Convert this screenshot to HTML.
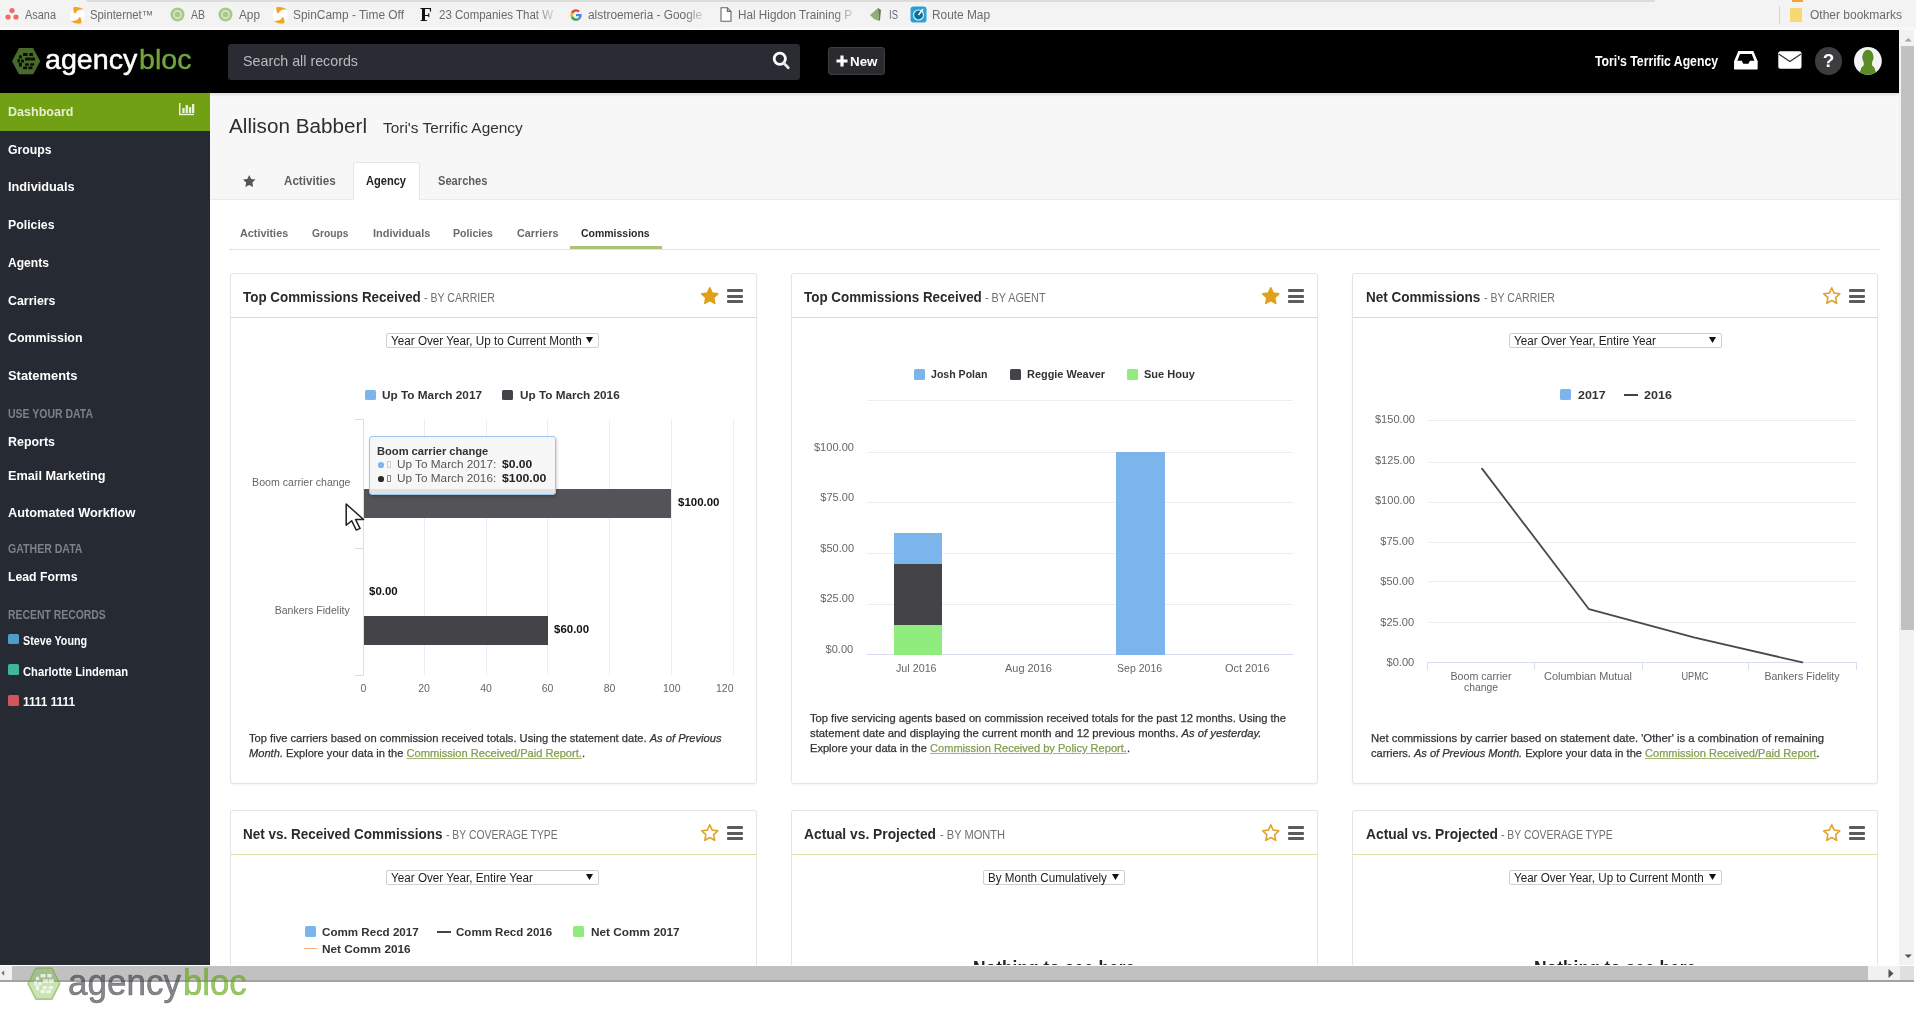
<!DOCTYPE html>
<html lang="en">
<head>
<meta charset="utf-8">
<title>AgencyBloc - Dashboard</title>
<style>
html,body{margin:0;padding:0;background:#fff;}
body{width:1916px;height:1028px;overflow:hidden;font-family:"Liberation Sans",Arial,sans-serif;}
#root{will-change:transform;filter:blur(.45px);position:relative;width:1916px;height:1028px;overflow:hidden;background:#fff;}
.b{position:absolute;box-sizing:border-box;}
.t{position:absolute;white-space:nowrap;line-height:1;display:block;}
svg{position:absolute;overflow:visible;}
a{color:#839c4e;text-decoration:underline;text-decoration-color:#a3b878;-webkit-text-stroke-color:#839c4e;}
i{font-style:italic;}
</style>
</head>
<body>
<div id="root">
<div class="b" style="left:0px;top:0px;width:1916px;height:30px;background:#f3f3f3;"></div>
<div class="b" style="left:0px;top:27px;width:1916px;height:3px;background:#f8f8f8;"></div>
<div class="b" style="left:86px;top:0px;width:1569px;height:1.8px;background:#dcdcdc;border-radius:0 0 5px 5px;"></div>
<svg style="left:5px;top:7px" width="14" height="14" viewBox="0 0 14 14"><circle cx="7" cy="3.6" r="2.6" fill="#f06a6a"/><circle cx="3" cy="10" r="2.6" fill="#f06a6a"/><circle cx="11" cy="10" r="2.6" fill="#f06a6a"/></svg>
<span class="t" style="top:9px;font-size:12px;color:#6a6a6a;left:25.00px;transform:scaleX(0.9109);transform-origin:0 50%;">Asana</span>
<svg style="left:68.5px;top:6px" width="16.500" height="18.500" viewBox="0 0 16.500 18.500"><circle cx="8.200" cy="9.200" r="7.800" fill="#fff" opacity=".85"/><g fill="#f5a21f"><path d="M4.500 1.300 C8 .600 12 1.400 14.900 3.600 C12 3.400 9.600 3.800 8.100 5 C7.100 5.900 6.600 6.900 6.100 7.800 C4.400 6.500 3.900 3.900 4.500 1.300Z"/><path d="M4.500 1.300 C8 .600 12 1.400 14.900 3.600 C12 3.400 9.600 3.800 8.100 5 C7.100 5.900 6.600 6.900 6.100 7.800 C4.400 6.500 3.900 3.900 4.500 1.300Z" transform="rotate(180 8.350 9.250)"/></g></svg>
<span class="t" style="top:9px;font-size:12px;color:#6a6a6a;left:90.00px;transform:scaleX(0.9445);transform-origin:0 50%;">Spinternet™</span>
<svg style="left:170px;top:7px" width="15" height="15" viewBox="0 0 15 15"><circle cx="7.5" cy="7.5" r="7" fill="#a9c98a"/><circle cx="7.5" cy="7.5" r="3.6" fill="none" stroke="#e6f0da" stroke-width="1.2"/></svg>
<span class="t" style="top:9px;font-size:12px;color:#6a6a6a;left:191.00px;transform:scaleX(0.8741);transform-origin:0 50%;">AB</span>
<svg style="left:218px;top:7px" width="15" height="15" viewBox="0 0 15 15"><circle cx="7.5" cy="7.5" r="7" fill="#a9c98a"/><circle cx="7.5" cy="7.5" r="3.6" fill="none" stroke="#e6f0da" stroke-width="1.2"/></svg>
<span class="t" style="top:9px;font-size:12px;color:#6a6a6a;left:239.00px;transform:scaleX(0.9832);transform-origin:0 50%;">App</span>
<svg style="left:271.8px;top:6px" width="16.500" height="18.500" viewBox="0 0 16.500 18.500"><circle cx="8.200" cy="9.200" r="7.800" fill="#fff" opacity=".85"/><g fill="#f5a21f"><path d="M4.500 1.300 C8 .600 12 1.400 14.900 3.600 C12 3.400 9.600 3.800 8.100 5 C7.100 5.900 6.600 6.900 6.100 7.800 C4.400 6.500 3.900 3.900 4.500 1.300Z"/><path d="M4.500 1.300 C8 .600 12 1.400 14.900 3.600 C12 3.400 9.600 3.800 8.100 5 C7.100 5.900 6.600 6.900 6.100 7.800 C4.400 6.500 3.900 3.900 4.500 1.300Z" transform="rotate(180 8.350 9.250)"/></g></svg>
<span class="t" style="top:9px;font-size:12px;color:#6a6a6a;left:293.00px;transform:scaleX(0.9926);transform-origin:0 50%;">SpinCamp - Time Off</span>
<span class="t" style="top:6px;font-size:18px;color:#111;font-weight:700;font-family:'Liberation Serif',serif;left:420.00px;transform:scaleX(1.0909);transform-origin:0 50%;">F</span>
<span class="t" style="top:9px;font-size:12px;color:#6a6a6a;left:439.00px;transform:scaleX(0.9566);transform-origin:0 50%;">23 Companies That W</span>
<div class="b" style="left:535px;top:4px;width:21px;height:24px;background:linear-gradient(90deg,rgba(243,243,243,0),rgba(243,243,243,.85));"></div>
<svg style="left:569px;top:8px" width="14" height="14" viewBox="0 0 14 14"><path d="M7 1.2A5.8 5.8 0 0 0 1.9 4.3L4 5.9A3.4 3.4 0 0 1 7 3.6c.9 0 1.6.3 2.2.8l1.7-1.7A5.8 5.8 0 0 0 7 1.200Z" fill="#ea4335"/><path d="M1.9 4.3a5.8 5.8 0 0 0 0 5.400L4 8.1a3.400 3.400 0 0 1 0-2.200Z" fill="#fbbc05"/><path d="M1.900 9.700A5.800 5.800 0 0 0 7 12.800c1.500 0 2.800-.5 3.800-1.400L8.900 9.900c-.5.400-1.200.600-1.900.600A3.400 3.400 0 0 1 4 8.100Z" fill="#34a853"/><path d="M12.700 5.900H7v2.300h3.300c-.2.700-.700 1.300-1.400 1.700l1.900 1.500c1.200-1.100 1.900-2.700 1.900-4.400 0-.4 0-.700-.100-1.100Z" fill="#4285f4"/></svg>
<span class="t" style="top:9px;font-size:12px;color:#6a6a6a;left:588.00px;transform:scaleX(0.9879);transform-origin:0 50%;">alstroemeria - Google</span>
<div class="b" style="left:685px;top:4px;width:20px;height:24px;background:linear-gradient(90deg,rgba(243,243,243,0),rgba(243,243,243,.85));"></div>
<svg style="left:720px;top:7px" width="12" height="15" viewBox="0 0 12 15"><path d="M1 .7h6.300L11 4.400V14.300H1Z" fill="#fff" stroke="#666" stroke-width="1.1"/><path d="M7.300.700V4.400H11" fill="none" stroke="#666" stroke-width="1.1"/></svg>
<span class="t" style="top:9px;font-size:12px;color:#6a6a6a;left:738.00px;transform:scaleX(0.9766);transform-origin:0 50%;">Hal Higdon Training P</span>
<div class="b" style="left:835px;top:4px;width:20px;height:24px;background:linear-gradient(90deg,rgba(243,243,243,0),rgba(243,243,243,.85));"></div>
<svg style="left:869px;top:7px" width="13" height="15" viewBox="0 0 13 15"><path d="M1 8 L9 1 L10 14 L5 12Z" fill="#8faf7a"/><path d="M9 1 L12 3 L11 13 L10 14Z" fill="#5d7d4d"/></svg>
<span class="t" style="top:9px;font-size:12px;color:#6a6a6a;left:889.00px;transform:scaleX(0.7934);transform-origin:0 50%;">IS</span>
<svg style="left:910px;top:6px" width="17" height="17" viewBox="0 0 17 17"><rect x=".5" y=".5" width="16" height="16" rx="3" fill="#2a9fd8"/><circle cx="8.5" cy="9" r="5" fill="#0e6f8f" stroke="#d5efff" stroke-width="1.2"/><path d="M8.500 9 L13 3" stroke="#fff" stroke-width="1.4"/></svg>
<span class="t" style="top:9px;font-size:12px;color:#6a6a6a;left:932.00px;transform:scaleX(0.9880);transform-origin:0 50%;">Route Map</span>
<div class="b" style="left:1779px;top:6px;width:1px;height:18px;background:#d5d5d5;"></div>
<div class="b" style="left:1790px;top:8px;width:12px;height:14px;background:#f8d775;border-radius:1px;"></div>
<div class="b" style="left:1792px;top:0px;width:11px;height:2px;background:#f3a23a;"></div>
<span class="t" style="top:9px;font-size:12px;color:#6a6a6a;left:1810.00px;">Other bookmarks</span>
<div class="b" style="left:0px;top:30px;width:1899px;height:63px;background:#000;"></div>
<svg style="left:11.5px;top:47.8px;filter:blur(.4px);" width="28.2" height="26.3" viewBox="0 0 28.200 26.300" preserveAspectRatio="none"><path d="M0 13.150 L7 0 H21.200 L28.200 13.150 L21.200 26.300 H7Z" fill="#486a2a"/><g fill="rgba(0,0,0,.88)"><rect x="11.05" y="4.95" width="4.5" height="3.1" rx=".6"/><rect x="17.15" y="4.95" width="3.8" height="3.1" rx=".6"/><rect x="13.05" y="9.45" width="5" height="3.1" rx=".6"/><rect x="18.35" y="9.45" width="4.6" height="3.1" rx=".6"/><rect x="13.05" y="15.15" width="3.8" height="2.7" rx=".6"/><rect x="18.35" y="15.15" width="3.8" height="2.7" rx=".6"/><rect x="11.05" y="18.45" width="4.1" height="2.7" rx=".6"/><rect x="16.35" y="18.45" width="4.2" height="2.7" rx=".6"/><rect x="5.35" y="11.05" width="2.5" height="3.5" rx=".6"/><rect x="6.95" y="7.35" width="2.9" height="3.2" rx=".6"/><rect x="8.95" y="11.45" width="3" height="3.1" rx=".6"/><rect x="6.95" y="14.75" width="2.9" height="3.9" rx=".6"/></g></svg>
<span class="t" style="top:45px;font-size:28.5px;color:#fff;left:45.40px;transform:scaleX(1.0054);transform-origin:0 50%;-webkit-text-stroke:.5px #fff;">agency</span>
<span class="t" style="top:45px;font-size:28.5px;color:#73a53a;left:139.30px;transform:scaleX(1.0039);transform-origin:0 50%;-webkit-text-stroke:.4px #73a53a;">bloc</span>
<div class="b" style="left:228px;top:44px;width:571.5px;height:36px;background:#2a2c33;border-radius:3px;"></div>
<span class="t" style="top:54px;font-size:14.5px;color:#b9bbbf;left:243.00px;transform:scaleX(0.9841);transform-origin:0 50%;">Search all records</span>
<svg style="left:772px;top:51px" width="19" height="20" viewBox="0 0 19 20"><circle cx="7.800" cy="7.800" r="5.600" fill="none" stroke="#fff" stroke-width="2.800"/><path d="M11.900 12.200 L16.300 16.800" stroke="#e8e8e8" stroke-width="2.700" stroke-linecap="round"/></svg>
<div class="b" style="left:827.5px;top:47px;width:57px;height:27.5px;background:#2b2b2f;border:1px solid #3e3e42;border-radius:3px;"></div>
<svg style="left:836px;top:55px" width="12" height="12" viewBox="0 0 12 12"><path d="M6 .5V11.500M.500 6H11.500" stroke="#fff" stroke-width="3.200"/></svg>
<span class="t" style="top:55px;font-size:13.5px;color:#fff;font-weight:700;left:850.00px;transform:scaleX(0.9904);transform-origin:0 50%;">New</span>
<span class="t" style="top:54px;font-size:14.5px;color:#fff;font-weight:700;left:1595.00px;transform:scaleX(0.8435);transform-origin:0 50%;">Tori's Terrific Agency</span>
<svg style="left:1733.300px;top:49.700px" width="25.700" height="20.600" preserveAspectRatio="none" viewBox="0 0 25 21"><path d="M5.200 1 H19.800 L24 11.500 V19 Q24 20 23 20 H2 Q1 20 1 19 V11.500Z" fill="#fff"/><path d="M6.800 4 H18.200 L20.800 11 H16.500 L15 14 H10 L8.500 11 H4.200Z" fill="#000"/></svg>
<svg style="left:1777.800px;top:50.800px" width="23.800" height="18" viewBox="0 0 24 18"><rect x=".3" y=".3" width="23.400" height="17.400" rx="2" fill="#fff"/><path d="M.800 3 L12 10.600 L23.200 3" fill="none" stroke="#333" stroke-width="1.300"/></svg>
<div class="b" style="left:1814.7px;top:47.3px;width:27.8px;height:27.8px;background:#3d3d40;border-radius:50%;"></div>
<span class="t" style="top:51px;font-size:19px;color:#fff;font-weight:700;left:1828.60px;transform:translateX(-50%) ;">?</span>
<svg style="left:1854px;top:47.300px" width="27.800" height="27.800" viewBox="0 0 28 28"><defs><clipPath id="av"><circle cx="14" cy="14" r="14"/></clipPath></defs><circle cx="14" cy="14" r="14" fill="#f4f4f4"/><g clip-path="url(#av)" fill="#5b8c26"><ellipse cx="14" cy="10.200" rx="5.700" ry="7.400"/><rect x="9.800" y="12" width="8.400" height="9"/><path d="M5.800 30 Q5.800 19.800 10.500 18.500 H17.500 Q22.200 19.800 22.200 30Z"/></g></svg>
<div class="b" style="left:1899px;top:30px;width:14.5px;height:935px;background:#f2f2f2;"></div>
<div class="b" style="left:1901px;top:46px;width:13px;height:583.5px;background:#c1c1c1;"></div>
<svg style="left:1903.500px;top:37px" width="8.500" height="5" viewBox="0 0 11 6"><path d="M1 5.500 L5.500 1 L10 5.500Z" fill="#a3a3a3"/></svg>
<svg style="left:1903.500px;top:953.500px" width="8.500" height="5" viewBox="0 0 11 6"><path d="M1 .5 L5.500 5 L10 .500Z" fill="#505050"/></svg>
<div class="b" style="left:0px;top:93px;width:210px;height:872px;background:#262a33;"></div>
<div class="b" style="left:0px;top:93px;width:210px;height:37.5px;background:#72a014;"></div>
<span class="t" style="top:105px;font-size:13.5px;color:#e6efd0;font-weight:700;left:7.50px;transform:scaleX(0.9289);transform-origin:0 50%;">Dashboard</span>
<svg style="left:179px;top:103px" width="16" height="13" viewBox="0 0 16 13"><g fill="#e9f2d8"><rect x="0" y="0" width="1.500" height="12"/><rect x="0" y="10.700" width="15" height="1.500"/><rect x="3.300" y="5" width="2.300" height="5"/><rect x="6.600" y="2" width="2.300" height="8"/><rect x="9.900" y="4" width="2.300" height="6"/><rect x="13" y="1" width="2.300" height="9"/></g></svg>
<span class="t" style="top:143px;font-size:13.5px;color:#fff;font-weight:700;left:7.50px;transform:scaleX(0.9060);transform-origin:0 50%;">Groups</span>
<span class="t" style="top:180px;font-size:13.5px;color:#fff;font-weight:700;left:7.50px;transform:scaleX(0.9431);transform-origin:0 50%;">Individuals</span>
<span class="t" style="top:218px;font-size:13.5px;color:#fff;font-weight:700;left:7.50px;transform:scaleX(0.9112);transform-origin:0 50%;">Policies</span>
<span class="t" style="top:256px;font-size:13.5px;color:#fff;font-weight:700;left:7.50px;transform:scaleX(0.8959);transform-origin:0 50%;">Agents</span>
<span class="t" style="top:294px;font-size:13.5px;color:#fff;font-weight:700;left:7.50px;transform:scaleX(0.9170);transform-origin:0 50%;">Carriers</span>
<span class="t" style="top:331px;font-size:13.5px;color:#fff;font-weight:700;left:7.50px;transform:scaleX(0.9196);transform-origin:0 50%;">Commission</span>
<span class="t" style="top:369px;font-size:13.5px;color:#fff;font-weight:700;left:7.50px;transform:scaleX(0.9549);transform-origin:0 50%;">Statements</span>
<span class="t" style="top:408px;font-size:12.5px;color:#7d8189;font-weight:700;left:7.50px;transform:scaleX(0.8382);transform-origin:0 50%;">USE YOUR DATA</span>
<span class="t" style="top:435px;font-size:13.5px;color:#fff;font-weight:700;left:7.50px;transform:scaleX(0.9213);transform-origin:0 50%;">Reports</span>
<span class="t" style="top:469px;font-size:13.5px;color:#fff;font-weight:700;left:7.50px;transform:scaleX(0.9417);transform-origin:0 50%;">Email Marketing</span>
<span class="t" style="top:506px;font-size:13.5px;color:#fff;font-weight:700;left:7.50px;transform:scaleX(0.9447);transform-origin:0 50%;">Automated Workflow</span>
<span class="t" style="top:543px;font-size:12.5px;color:#7d8189;font-weight:700;left:7.50px;transform:scaleX(0.8448);transform-origin:0 50%;">GATHER DATA</span>
<span class="t" style="top:570px;font-size:13.5px;color:#fff;font-weight:700;left:7.50px;transform:scaleX(0.9081);transform-origin:0 50%;">Lead Forms</span>
<span class="t" style="top:609px;font-size:12.5px;color:#7d8189;font-weight:700;left:7.50px;transform:scaleX(0.8332);transform-origin:0 50%;">RECENT RECORDS</span>
<div class="b" style="left:7.5px;top:633.5px;width:11.3px;height:10.5px;background:#4e9ccb;border-radius:1.5px;"></div>
<span class="t" style="top:635px;font-size:12.5px;color:#fff;font-weight:700;left:23.40px;transform:scaleX(0.8597);transform-origin:0 50%;">Steve Young</span>
<div class="b" style="left:7.5px;top:664.2px;width:11.3px;height:10.5px;background:#3fb59c;border-radius:1.5px;"></div>
<span class="t" style="top:666px;font-size:12.5px;color:#fff;font-weight:700;left:23.40px;transform:scaleX(0.8946);transform-origin:0 50%;">Charlotte Lindeman</span>
<div class="b" style="left:7.5px;top:695.2px;width:11.3px;height:10.7px;background:#cf555b;border-radius:1.5px;"></div>
<span class="t" style="top:696px;font-size:12.5px;color:#fff;font-weight:700;left:23.40px;transform:scaleX(0.9463);transform-origin:0 50%;">1111 1111</span>
<div class="b" style="left:210px;top:93px;width:1689px;height:106px;background:#f7f7f7;"></div>
<div class="b" style="left:210px;top:198.5px;width:1689px;height:1px;background:#ebebeb;"></div>
<div class="b" style="left:210px;top:93px;width:1689px;height:4px;background:linear-gradient(180deg,rgba(0,0,0,.10),rgba(0,0,0,0));"></div>
<span class="t" style="top:116px;font-size:20.5px;color:#2e2e2e;left:229.30px;transform:scaleX(1.0091);transform-origin:0 50%;">Allison Babberl</span>
<span class="t" style="top:120px;font-size:15.5px;color:#333;left:382.80px;transform:scaleX(0.9950);transform-origin:0 50%;">Tori's Terrific Agency</span>
<svg style="left:242.500px;top:174.500px" width="12.500" height="12" viewBox="0 0 24 23"><path d="M12 0 L15.700 7.600 L24 8.800 L18 14.600 L19.400 23 L12 19 L4.600 23 L6 14.600 L0 8.800 L8.300 7.600Z" fill="#555"/></svg>
<span class="t" style="top:175px;font-size:12.5px;color:#5e5e5e;font-weight:700;left:284.30px;transform:scaleX(0.9300);transform-origin:0 50%;">Activities</span>
<div class="b" style="left:353px;top:161.7px;width:67px;height:38.3px;background:#fff;border:1px solid #e6e6e6;border-bottom:none;border-radius:3px 3px 0 0;"></div>
<span class="t" style="top:175px;font-size:12.5px;color:#222;font-weight:700;left:366.30px;transform:scaleX(0.8858);transform-origin:0 50%;">Agency</span>
<span class="t" style="top:175px;font-size:12.5px;color:#5e5e5e;font-weight:700;left:437.70px;transform:scaleX(0.8901);transform-origin:0 50%;">Searches</span>
<span class="t" style="top:228px;font-size:11.5px;color:#6a6a6a;font-weight:700;left:240.30px;transform:scaleX(0.9425);transform-origin:0 50%;">Activities</span>
<span class="t" style="top:228px;font-size:11.5px;color:#6a6a6a;font-weight:700;left:312.30px;transform:scaleX(0.8926);transform-origin:0 50%;">Groups</span>
<span class="t" style="top:228px;font-size:11.5px;color:#6a6a6a;font-weight:700;left:372.50px;transform:scaleX(0.9538);transform-origin:0 50%;">Individuals</span>
<span class="t" style="top:228px;font-size:11.5px;color:#6a6a6a;font-weight:700;left:453.30px;transform:scaleX(0.9202);transform-origin:0 50%;">Policies</span>
<span class="t" style="top:228px;font-size:11.5px;color:#6a6a6a;font-weight:700;left:516.50px;transform:scaleX(0.9405);transform-origin:0 50%;">Carriers</span>
<span class="t" style="top:228px;font-size:11.5px;color:#2a2a2a;font-weight:700;left:581.30px;transform:scaleX(0.9109);transform-origin:0 50%;">Commissions</span>
<div class="b" style="left:229px;top:249px;width:1651px;height:1px;background:#e2e2e2;"></div>
<div class="b" style="left:570.2px;top:246.3px;width:91.8px;height:3px;background:#adc178;"></div>
<div class="b" style="left:229.5px;top:273px;width:527px;height:510.5px;background:#fff;border:1px solid #e4e4e4;border-radius:3px;box-shadow:0 1px 2px rgba(0,0,0,.05);"></div>
<div class="b" style="left:230.5px;top:317px;width:525px;height:1px;background:#dbe0a8;"></div>
<span class="t" style="top:290px;font-size:14px;color:#2b2b2b;font-weight:700;left:243.10px;transform:scaleX(0.9575);transform-origin:0 50%;">Top Commissions Received</span>
<span class="t" style="top:292px;font-size:12px;color:#707070;left:424.40px;transform:scaleX(0.8823);transform-origin:0 50%;">- BY CARRIER</span>
<svg style="left:701.2px;top:287px" width="17.500" height="17" viewBox="0 0 24 23"><path d="M12 1 L15.300 8.200 L23 9.200 L17.300 14.500 L18.800 22.200 L12 18.400 L5.200 22.200 L6.700 14.500 L1 9.200 L8.700 8.200Z" fill="#dfa01a" stroke="#dfa01a" stroke-width="2.200" stroke-linejoin="round"/></svg>
<div class="b" style="left:726.5px;top:289.3px;width:16.6px;height:2.9px;background:#5c5c5c;border-radius:1px;"></div>
<div class="b" style="left:726.5px;top:294.8px;width:16.6px;height:2.9px;background:#5c5c5c;border-radius:1px;"></div>
<div class="b" style="left:726.5px;top:300.3px;width:16.6px;height:2.9px;background:#5c5c5c;border-radius:1px;"></div>
<div class="b" style="left:790.5px;top:273px;width:527.2px;height:510.5px;background:#fff;border:1px solid #e4e4e4;border-radius:3px;box-shadow:0 1px 2px rgba(0,0,0,.05);"></div>
<div class="b" style="left:791.5px;top:317px;width:525.2px;height:1px;background:#dbe0a8;"></div>
<span class="t" style="top:290px;font-size:14px;color:#2b2b2b;font-weight:700;left:804.10px;transform:scaleX(0.9575);transform-origin:0 50%;">Top Commissions Received</span>
<span class="t" style="top:292px;font-size:12px;color:#707070;left:985.40px;transform:scaleX(0.9011);transform-origin:0 50%;">- BY AGENT</span>
<svg style="left:1262.4px;top:287px" width="17.500" height="17" viewBox="0 0 24 23"><path d="M12 1 L15.300 8.200 L23 9.200 L17.300 14.500 L18.800 22.200 L12 18.400 L5.200 22.200 L6.700 14.500 L1 9.200 L8.700 8.200Z" fill="#dfa01a" stroke="#dfa01a" stroke-width="2.200" stroke-linejoin="round"/></svg>
<div class="b" style="left:1287.7px;top:289.3px;width:16.6px;height:2.9px;background:#5c5c5c;border-radius:1px;"></div>
<div class="b" style="left:1287.7px;top:294.8px;width:16.6px;height:2.9px;background:#5c5c5c;border-radius:1px;"></div>
<div class="b" style="left:1287.7px;top:300.3px;width:16.6px;height:2.9px;background:#5c5c5c;border-radius:1px;"></div>
<div class="b" style="left:1352.3px;top:273px;width:526.2px;height:510.5px;background:#fff;border:1px solid #e4e4e4;border-radius:3px;box-shadow:0 1px 2px rgba(0,0,0,.05);"></div>
<div class="b" style="left:1353.3px;top:317px;width:524.2px;height:1px;background:#dbe0a8;"></div>
<span class="t" style="top:290px;font-size:14px;color:#2b2b2b;font-weight:700;left:1365.90px;transform:scaleX(0.9658);transform-origin:0 50%;">Net Commissions</span>
<span class="t" style="top:292px;font-size:12px;color:#707070;left:1483.60px;transform:scaleX(0.8823);transform-origin:0 50%;">- BY CARRIER</span>
<svg style="left:1823.2px;top:287px" width="17.500" height="17" viewBox="0 0 24 23"><path d="M12 1 L15.300 8.200 L23 9.200 L17.300 14.500 L18.800 22.200 L12 18.400 L5.200 22.200 L6.700 14.500 L1 9.200 L8.700 8.200Z" fill="#fff" stroke="#e0a42c" stroke-width="2.200" stroke-linejoin="round"/></svg>
<div class="b" style="left:1848.5px;top:289.3px;width:16.6px;height:2.9px;background:#5c5c5c;border-radius:1px;"></div>
<div class="b" style="left:1848.5px;top:294.8px;width:16.6px;height:2.9px;background:#5c5c5c;border-radius:1px;"></div>
<div class="b" style="left:1848.5px;top:300.3px;width:16.6px;height:2.9px;background:#5c5c5c;border-radius:1px;"></div>
<div class="b" style="left:229.5px;top:810px;width:527px;height:155px;background:#fff;border:1px solid #e4e4e4;border-bottom:none;border-radius:3px 3px 0 0;"></div>
<div class="b" style="left:230.5px;top:854px;width:525px;height:1px;background:#dbe0a8;"></div>
<span class="t" style="top:827px;font-size:14px;color:#2b2b2b;font-weight:700;left:243.10px;transform:scaleX(0.9634);transform-origin:0 50%;">Net vs. Received Commissions</span>
<span class="t" style="top:829px;font-size:12px;color:#707070;left:446.00px;transform:scaleX(0.8663);transform-origin:0 50%;">- BY COVERAGE TYPE</span>
<svg style="left:701.2px;top:824px" width="17.500" height="17" viewBox="0 0 24 23"><path d="M12 1 L15.300 8.200 L23 9.200 L17.300 14.500 L18.800 22.200 L12 18.400 L5.200 22.200 L6.700 14.500 L1 9.200 L8.700 8.200Z" fill="#fff" stroke="#e0a42c" stroke-width="2.200" stroke-linejoin="round"/></svg>
<div class="b" style="left:726.5px;top:826.3px;width:16.6px;height:2.9px;background:#5c5c5c;border-radius:1px;"></div>
<div class="b" style="left:726.5px;top:831.8px;width:16.6px;height:2.9px;background:#5c5c5c;border-radius:1px;"></div>
<div class="b" style="left:726.5px;top:837.3px;width:16.6px;height:2.9px;background:#5c5c5c;border-radius:1px;"></div>
<div class="b" style="left:790.5px;top:810px;width:527.2px;height:155px;background:#fff;border:1px solid #e4e4e4;border-bottom:none;border-radius:3px 3px 0 0;"></div>
<div class="b" style="left:791.5px;top:854px;width:525.2px;height:1px;background:#dbe0a8;"></div>
<span class="t" style="top:827px;font-size:14px;color:#2b2b2b;font-weight:700;left:804.10px;transform:scaleX(0.9863);transform-origin:0 50%;">Actual vs. Projected</span>
<span class="t" style="top:829px;font-size:12px;color:#707070;left:939.60px;transform:scaleX(0.9226);transform-origin:0 50%;">- BY MONTH</span>
<svg style="left:1262.4px;top:824px" width="17.500" height="17" viewBox="0 0 24 23"><path d="M12 1 L15.300 8.200 L23 9.200 L17.300 14.500 L18.800 22.200 L12 18.400 L5.200 22.200 L6.700 14.500 L1 9.200 L8.700 8.200Z" fill="#fff" stroke="#e0a42c" stroke-width="2.200" stroke-linejoin="round"/></svg>
<div class="b" style="left:1287.7px;top:826.3px;width:16.6px;height:2.9px;background:#5c5c5c;border-radius:1px;"></div>
<div class="b" style="left:1287.7px;top:831.8px;width:16.6px;height:2.9px;background:#5c5c5c;border-radius:1px;"></div>
<div class="b" style="left:1287.7px;top:837.3px;width:16.6px;height:2.9px;background:#5c5c5c;border-radius:1px;"></div>
<div class="b" style="left:1352.3px;top:810px;width:526.2px;height:155px;background:#fff;border:1px solid #e4e4e4;border-bottom:none;border-radius:3px 3px 0 0;"></div>
<div class="b" style="left:1353.3px;top:854px;width:524.2px;height:1px;background:#dbe0a8;"></div>
<span class="t" style="top:827px;font-size:14px;color:#2b2b2b;font-weight:700;left:1365.90px;transform:scaleX(0.9863);transform-origin:0 50%;">Actual vs. Projected</span>
<span class="t" style="top:829px;font-size:12px;color:#707070;left:1501.40px;transform:scaleX(0.8663);transform-origin:0 50%;">- BY COVERAGE TYPE</span>
<svg style="left:1823.2px;top:824px" width="17.500" height="17" viewBox="0 0 24 23"><path d="M12 1 L15.300 8.200 L23 9.200 L17.300 14.500 L18.800 22.200 L12 18.400 L5.200 22.200 L6.700 14.500 L1 9.200 L8.700 8.200Z" fill="#fff" stroke="#e0a42c" stroke-width="2.200" stroke-linejoin="round"/></svg>
<div class="b" style="left:1848.5px;top:826.3px;width:16.6px;height:2.9px;background:#5c5c5c;border-radius:1px;"></div>
<div class="b" style="left:1848.5px;top:831.8px;width:16.6px;height:2.9px;background:#5c5c5c;border-radius:1px;"></div>
<div class="b" style="left:1848.5px;top:837.3px;width:16.6px;height:2.9px;background:#5c5c5c;border-radius:1px;"></div>
<div class="b" style="left:386px;top:333px;width:212.7px;height:15px;background:#fff;border:1px solid #d0d0d0;border-radius:2px;"></div>
<span class="t" style="top:335px;font-size:12px;color:#222;left:391.00px;transform:scaleX(0.9746);transform-origin:0 50%;">Year Over Year, Up to Current Month</span>
<svg style="left:586.2px;top:337.2px" width="7" height="6" viewBox="0 0 7 6"><path d="M0 0 H7 L3.500 6Z" fill="#111"/></svg>
<div class="b" style="left:1509px;top:333px;width:212.8px;height:15px;background:#fff;border:1px solid #d0d0d0;border-radius:2px;"></div>
<span class="t" style="top:335px;font-size:12px;color:#222;left:1514.00px;transform:scaleX(0.9748);transform-origin:0 50%;">Year Over Year, Entire Year</span>
<svg style="left:1709px;top:337.2px" width="7" height="6" viewBox="0 0 7 6"><path d="M0 0 H7 L3.500 6Z" fill="#111"/></svg>
<div class="b" style="left:385.8px;top:870px;width:212.9px;height:15px;background:#fff;border:1px solid #d0d0d0;border-radius:2px;"></div>
<span class="t" style="top:872px;font-size:12px;color:#222;left:390.80px;transform:scaleX(0.9748);transform-origin:0 50%;">Year Over Year, Entire Year</span>
<svg style="left:586.2px;top:874.2px" width="7" height="6" viewBox="0 0 7 6"><path d="M0 0 H7 L3.500 6Z" fill="#111"/></svg>
<div class="b" style="left:982.5px;top:870px;width:142.2px;height:15px;background:#fff;border:1px solid #d0d0d0;border-radius:2px;"></div>
<span class="t" style="top:872px;font-size:12px;color:#222;left:987.50px;transform:scaleX(0.9681);transform-origin:0 50%;">By Month Cumulatively</span>
<svg style="left:1112px;top:874.2px" width="7" height="6" viewBox="0 0 7 6"><path d="M0 0 H7 L3.500 6Z" fill="#111"/></svg>
<div class="b" style="left:1509px;top:870px;width:213px;height:15px;background:#fff;border:1px solid #d0d0d0;border-radius:2px;"></div>
<span class="t" style="top:872px;font-size:12px;color:#222;left:1514.00px;transform:scaleX(0.9690);transform-origin:0 50%;">Year Over Year, Up to Current Month</span>
<svg style="left:1708.5px;top:874.2px" width="7" height="6" viewBox="0 0 7 6"><path d="M0 0 H7 L3.500 6Z" fill="#111"/></svg>
<div class="b" style="left:364.7px;top:389.5px;width:11px;height:10.5px;background:#7cb5ec;border-radius:1.5px;"></div>
<span class="t" style="top:390px;font-size:11.5px;color:#333;font-weight:700;left:382.30px;transform:scaleX(1.0248);transform-origin:0 50%;">Up To March 2017</span>
<div class="b" style="left:502.2px;top:389.5px;width:11px;height:10.5px;background:#434348;border-radius:1.5px;"></div>
<span class="t" style="top:390px;font-size:11.5px;color:#333;font-weight:700;left:520.30px;transform:scaleX(1.0217);transform-origin:0 50%;">Up To March 2016</span>
<div class="b" style="left:423.6px;top:419.5px;width:1px;height:255.5px;background:#ededf0;"></div>
<div class="b" style="left:485.6px;top:419.5px;width:1px;height:255.5px;background:#ededf0;"></div>
<div class="b" style="left:547px;top:419.5px;width:1px;height:255.5px;background:#ededf0;"></div>
<div class="b" style="left:609px;top:419.5px;width:1px;height:255.5px;background:#ededf0;"></div>
<div class="b" style="left:671.3px;top:419.5px;width:1px;height:255.5px;background:#ededf0;"></div>
<div class="b" style="left:733.2px;top:419.5px;width:1px;height:255.5px;background:#ededf0;"></div>
<div class="b" style="left:363px;top:419.5px;width:1px;height:255.5px;background:#d6deef;"></div>
<div class="b" style="left:355px;top:419px;width:8.5px;height:1px;background:#d6deef;"></div>
<div class="b" style="left:355px;top:547.7px;width:8.5px;height:1px;background:#d6deef;"></div>
<div class="b" style="left:355px;top:674.5px;width:8.5px;height:1px;background:#d6deef;"></div>
<span class="t" style="top:477px;font-size:10.5px;color:#666;right:1566.00px;transform:scaleX(1.0096);transform-origin:100% 50%;">Boom carrier change</span>
<span class="t" style="top:605px;font-size:10.5px;color:#666;right:1566.00px;transform:scaleX(1.0040);transform-origin:100% 50%;">Bankers Fidelity</span>
<div class="b" style="left:364px;top:489px;width:307.2px;height:28.8px;background:#535358;"></div>
<div class="b" style="left:364px;top:616px;width:183.5px;height:28.8px;background:#434348;"></div>
<span class="t" style="top:497px;font-size:10.5px;color:#111;font-weight:700;left:677.60px;transform:scaleX(1.0930);transform-origin:0 50%;">$100.00</span>
<span class="t" style="top:586px;font-size:10.5px;color:#111;font-weight:700;left:369.10px;transform:scaleX(1.0920);transform-origin:0 50%;">$0.00</span>
<span class="t" style="top:624px;font-size:10.5px;color:#111;font-weight:700;left:553.90px;transform:scaleX(1.0926);transform-origin:0 50%;">$60.00</span>
<span class="t" style="top:683px;font-size:10.5px;color:#666;left:363.50px;transform:translateX(-50%) ;">0</span>
<span class="t" style="top:683px;font-size:10.5px;color:#666;left:424.10px;transform:translateX(-50%) ;">20</span>
<span class="t" style="top:683px;font-size:10.5px;color:#666;left:486.10px;transform:translateX(-50%) ;">40</span>
<span class="t" style="top:683px;font-size:10.5px;color:#666;left:547.50px;transform:translateX(-50%) ;">60</span>
<span class="t" style="top:683px;font-size:10.5px;color:#666;left:609.50px;transform:translateX(-50%) ;">80</span>
<span class="t" style="top:683px;font-size:10.5px;color:#666;left:671.80px;transform:translateX(-50%) ;">100</span>
<span class="t" style="top:683px;font-size:10.5px;color:#666;right:1182.50px;">120</span>
<div class="b" style="left:369.3px;top:436.3px;width:187px;height:58.7px;background:rgba(246,246,246,.87);border:1px solid #9cc6ee;border-radius:3px;box-shadow:1px 2px 3px rgba(0,0,0,.18);"></div>
<span class="t" style="top:446px;font-size:11.5px;color:#333;font-weight:700;left:376.80px;transform:scaleX(0.9674);transform-origin:0 50%;">Boom carrier change</span>
<div class="b" style="left:378.2px;top:462.3px;width:5.7px;height:5.7px;background:#7cb5ec;border-radius:50%;"></div>
<div class="b" style="left:386.8px;top:460.7px;width:4.4px;height:7.1px;border:1px solid #b9d3ec;"></div>
<span class="t" style="top:459px;font-size:11.5px;color:#555;left:397.40px;transform:scaleX(1.0232);transform-origin:0 50%;">Up To March 2017:</span>
<span class="t" style="top:459px;font-size:11.5px;color:#222;font-weight:700;left:502.20px;transform:scaleX(1.0528);transform-origin:0 50%;">$0.00</span>
<div class="b" style="left:378.2px;top:476px;width:5.7px;height:5.7px;background:#2a2a2a;border-radius:50%;"></div>
<div class="b" style="left:386.8px;top:474.6px;width:4.4px;height:7.2px;border:1px solid #8a8a8a;"></div>
<span class="t" style="top:473px;font-size:11.5px;color:#555;left:397.40px;transform:scaleX(1.0232);transform-origin:0 50%;">Up To March 2016:</span>
<span class="t" style="top:473px;font-size:11.5px;color:#222;font-weight:700;left:502.20px;transform:scaleX(1.0655);transform-origin:0 50%;">$100.00</span>
<svg style="left:345px;top:503.300px" width="21.600" height="28.600" viewBox="0 0 18 27" preserveAspectRatio="none"><path d="M1 1 V21 L5.600 16.800 L9.300 25.500 L12.600 24 L8.800 15.600 H15.500Z" fill="#fff" stroke="#222" stroke-width="1.300" stroke-linejoin="round"/></svg>
<span class="t" style="top:733px;font-size:11px;color:#333;left:248.60px;transform:scaleX(1.0129);transform-origin:0 50%;-webkit-text-stroke:.25px #333;">Top five carriers based on commission received totals. Using the statement date. <i>As of Previous</i></span>
<span class="t" style="top:748px;font-size:11px;color:#333;left:248.60px;transform:scaleX(1.0101);transform-origin:0 50%;-webkit-text-stroke:.25px #333;"><i>Month.</i> Explore your data in the <a>Commission Received/Paid Report.</a>.</span>
<div class="b" style="left:913.9px;top:369px;width:11px;height:10.5px;background:#7cb5ec;border-radius:1.5px;"></div>
<span class="t" style="top:369px;font-size:11.5px;color:#333;font-weight:700;left:930.60px;transform:scaleX(0.9192);transform-origin:0 50%;">Josh Polan</span>
<div class="b" style="left:1009.5px;top:369px;width:11px;height:10.5px;background:#434348;border-radius:1.5px;"></div>
<span class="t" style="top:369px;font-size:11.5px;color:#333;font-weight:700;left:1027.00px;transform:scaleX(0.9495);transform-origin:0 50%;">Reggie Weaver</span>
<div class="b" style="left:1126.5px;top:369px;width:11px;height:10.5px;background:#90ed7d;border-radius:1.5px;"></div>
<span class="t" style="top:369px;font-size:11.5px;color:#333;font-weight:700;left:1143.50px;transform:scaleX(0.9576);transform-origin:0 50%;">Sue Houy</span>
<div class="b" style="left:867px;top:399.5px;width:426.2px;height:1px;background:#ededf0;"></div>
<div class="b" style="left:867px;top:451.8px;width:426.2px;height:1px;background:#ededf0;"></div>
<div class="b" style="left:867px;top:502.2px;width:426.2px;height:1px;background:#ededf0;"></div>
<div class="b" style="left:867px;top:552.8px;width:426.2px;height:1px;background:#ededf0;"></div>
<div class="b" style="left:867px;top:603.5px;width:426.2px;height:1px;background:#ededf0;"></div>
<div class="b" style="left:867px;top:654.2px;width:426.2px;height:1px;background:#d6deef;"></div>
<span class="t" style="top:442px;font-size:10.5px;color:#666;right:1062.30px;transform:scaleX(1.0535);transform-origin:100% 50%;">$100.00</span>
<span class="t" style="top:492px;font-size:10.5px;color:#666;right:1062.30px;transform:scaleX(1.0521);transform-origin:100% 50%;">$75.00</span>
<span class="t" style="top:543px;font-size:10.5px;color:#666;right:1062.30px;transform:scaleX(1.0521);transform-origin:100% 50%;">$50.00</span>
<span class="t" style="top:593px;font-size:10.5px;color:#666;right:1062.30px;transform:scaleX(1.0521);transform-origin:100% 50%;">$25.00</span>
<span class="t" style="top:644px;font-size:10.5px;color:#666;right:1062.30px;transform:scaleX(1.0578);transform-origin:100% 50%;">$0.00</span>
<div class="b" style="left:893.5px;top:533.4px;width:48.2px;height:30.6px;background:#7cb5ec;"></div>
<div class="b" style="left:893.5px;top:564px;width:48.2px;height:60.8px;background:#434348;"></div>
<div class="b" style="left:893.5px;top:624.8px;width:48.2px;height:29.9px;background:#90ed7d;"></div>
<div class="b" style="left:1116.3px;top:452.3px;width:48.5px;height:202.4px;background:#7cb5ec;"></div>
<span class="t" style="top:663px;font-size:10.5px;color:#666;left:896.40px;transform:scaleX(1.0226);transform-origin:0 50%;">Jul 2016</span>
<span class="t" style="top:663px;font-size:10.5px;color:#666;left:1005.10px;transform:scaleX(1.0429);transform-origin:0 50%;">Aug 2016</span>
<span class="t" style="top:663px;font-size:10.5px;color:#666;left:1117.10px;transform:scaleX(1.0029);transform-origin:0 50%;">Sep 2016</span>
<span class="t" style="top:663px;font-size:10.5px;color:#666;left:1225.30px;transform:scaleX(1.0440);transform-origin:0 50%;">Oct 2016</span>
<span class="t" style="top:713px;font-size:11px;color:#333;left:810.00px;transform:scaleX(1.0150);transform-origin:0 50%;-webkit-text-stroke:.25px #333;">Top five servicing agents based on commission received totals for the past 12 months. Using the</span>
<span class="t" style="top:728px;font-size:11px;color:#333;left:810.00px;transform:scaleX(1.0260);transform-origin:0 50%;-webkit-text-stroke:.25px #333;">statement date and displaying the current month and 12 previous months. <i>As of yesterday.</i></span>
<span class="t" style="top:743px;font-size:11px;color:#333;left:810.00px;transform:scaleX(1.0064);transform-origin:0 50%;-webkit-text-stroke:.25px #333;">Explore your data in the <a>Commission Received by Policy Report.</a>.</span>
<div class="b" style="left:1559.5px;top:389.3px;width:11px;height:10.5px;background:#7cb5ec;border-radius:1.5px;"></div>
<span class="t" style="top:390px;font-size:11.5px;color:#333;font-weight:700;left:1577.50px;transform:scaleX(1.0823);transform-origin:0 50%;">2017</span>
<div class="b" style="left:1624px;top:394.3px;width:13.7px;height:2px;background:#434348;"></div>
<span class="t" style="top:390px;font-size:11.5px;color:#333;font-weight:700;left:1643.70px;transform:scaleX(1.0901);transform-origin:0 50%;">2016</span>
<div class="b" style="left:1427.8px;top:419.5px;width:428.4px;height:1px;background:#ededf0;"></div>
<div class="b" style="left:1427.8px;top:461.5px;width:428.4px;height:1px;background:#ededf0;"></div>
<div class="b" style="left:1427.8px;top:501.5px;width:428.4px;height:1px;background:#ededf0;"></div>
<div class="b" style="left:1427.8px;top:541.5px;width:428.4px;height:1px;background:#ededf0;"></div>
<div class="b" style="left:1427.8px;top:580.5px;width:428.4px;height:1px;background:#ededf0;"></div>
<div class="b" style="left:1427.8px;top:621.5px;width:428.4px;height:1px;background:#ededf0;"></div>
<div class="b" style="left:1427.8px;top:661.9px;width:428.4px;height:1px;background:#d6deef;"></div>
<div class="b" style="left:1427.3px;top:662px;width:1px;height:8px;background:#d6deef;"></div>
<div class="b" style="left:1534.3px;top:662px;width:1px;height:8px;background:#d6deef;"></div>
<div class="b" style="left:1641.7px;top:662px;width:1px;height:8px;background:#d6deef;"></div>
<div class="b" style="left:1748.4px;top:662px;width:1px;height:8px;background:#d6deef;"></div>
<div class="b" style="left:1855.7px;top:662px;width:1px;height:8px;background:#d6deef;"></div>
<span class="t" style="top:414px;font-size:10.5px;color:#666;right:501.40px;transform:scaleX(1.0535);transform-origin:100% 50%;">$150.00</span>
<span class="t" style="top:455px;font-size:10.5px;color:#666;right:501.40px;transform:scaleX(1.0535);transform-origin:100% 50%;">$125.00</span>
<span class="t" style="top:495px;font-size:10.5px;color:#666;right:501.40px;transform:scaleX(1.0535);transform-origin:100% 50%;">$100.00</span>
<span class="t" style="top:536px;font-size:10.5px;color:#666;right:501.40px;transform:scaleX(1.0521);transform-origin:100% 50%;">$75.00</span>
<span class="t" style="top:576px;font-size:10.5px;color:#666;right:501.40px;transform:scaleX(1.0521);transform-origin:100% 50%;">$50.00</span>
<span class="t" style="top:617px;font-size:10.5px;color:#666;right:501.40px;transform:scaleX(1.0521);transform-origin:100% 50%;">$25.00</span>
<span class="t" style="top:657px;font-size:10.5px;color:#666;right:501.40px;transform:scaleX(1.0578);transform-origin:100% 50%;">$0.00</span>
<svg style="left:0;top:0" width="1916" height="1028" viewBox="0 0 1916 1028"><path d="M1482 468.600 L1589 609.200 L1694.800 637.700 L1802.400 662.400" fill="none" stroke="#48484d" stroke-width="1.800" stroke-linejoin="round" stroke-linecap="round"/></svg>
<span class="t" style="top:671px;font-size:10.5px;color:#666;left:1481.30px;transform:translateX(-50%) scaleX(1.0148);">Boom carrier</span>
<span class="t" style="top:682px;font-size:10.5px;color:#666;left:1481.30px;transform:translateX(-50%) scaleX(0.9868);">change</span>
<span class="t" style="top:671px;font-size:10.5px;color:#666;left:1588.30px;transform:translateX(-50%) scaleX(1.0373);">Columbian Mutual</span>
<span class="t" style="top:671px;font-size:10.5px;color:#666;left:1695.40px;transform:translateX(-50%) scaleX(0.8732);">UPMC</span>
<span class="t" style="top:671px;font-size:10.5px;color:#666;left:1802.40px;transform:translateX(-50%) scaleX(1.0067);">Bankers Fidelity</span>
<span class="t" style="top:733px;font-size:11px;color:#333;left:1371.20px;transform:scaleX(1.0278);transform-origin:0 50%;-webkit-text-stroke:.25px #333;">Net commissions by carrier based on statement date. 'Other' is a combination of remaining</span>
<span class="t" style="top:748px;font-size:11px;color:#333;left:1371.20px;transform:scaleX(1.0049);transform-origin:0 50%;-webkit-text-stroke:.25px #333;">carriers. <i>As of Previous Month.</i> Explore your data in the <a>Commission Received/Paid Report</a>.</span>
<div class="b" style="left:304.6px;top:926px;width:11px;height:10.5px;background:#7cb5ec;border-radius:1.5px;"></div>
<span class="t" style="top:927px;font-size:11.5px;color:#333;font-weight:700;left:322.10px;transform:scaleX(1.0086);transform-origin:0 50%;">Comm Recd 2017</span>
<div class="b" style="left:437px;top:930.5px;width:14px;height:2px;background:#434348;"></div>
<span class="t" style="top:927px;font-size:11.5px;color:#333;font-weight:700;left:456.40px;transform:scaleX(1.0034);transform-origin:0 50%;">Comm Recd 2016</span>
<div class="b" style="left:572.6px;top:926px;width:11px;height:10.5px;background:#90ed7d;border-radius:1.5px;"></div>
<span class="t" style="top:927px;font-size:11.5px;color:#333;font-weight:700;left:590.70px;transform:scaleX(1.0278);transform-origin:0 50%;">Net Comm 2017</span>
<div class="b" style="left:303.6px;top:947.8px;width:13px;height:1.5px;background:#f8b07a;"></div>
<span class="t" style="top:944px;font-size:11.5px;color:#333;font-weight:700;left:322.10px;transform:scaleX(1.0278);transform-origin:0 50%;">Net Comm 2016</span>
<span class="t" style="top:958px;font-size:20px;color:#222;font-weight:700;left:972.50px;transform:scaleX(0.8688);transform-origin:0 50%;">Nothing to see here</span>
<span class="t" style="top:958px;font-size:20px;color:#222;font-weight:700;left:1533.90px;transform:scaleX(0.8688);transform-origin:0 50%;">Nothing to see here</span>
<div class="b" style="left:0px;top:965px;width:1916px;height:63px;background:#fff;"></div>
<div class="b" style="left:0px;top:965.5px;width:1914px;height:14.5px;background:#f1f1f1;"></div>
<div class="b" style="left:1899.5px;top:965.5px;width:14.5px;height:14.5px;background:#dfdfdf;"></div>
<div class="b" style="left:12px;top:965.5px;width:1856px;height:14.5px;background:#c1c1c1;"></div>
<div class="b" style="left:0px;top:980px;width:1914px;height:2px;background:#a3a3a3;"></div>
<svg style="left:.500px;top:970px" width="3.500" height="6" viewBox="0 0 6 9"><path d="M5.500 0 L.500 4.500 L5.500 9Z" fill="#6f6f6f"/></svg>
<svg style="left:1888px;top:968.500px" width="6" height="9" viewBox="0 0 6 9"><path d="M.500 0 L5.500 4.500 L.500 9Z" fill="#505050"/></svg>
<svg style="left:28px;top:968px;filter:blur(.4px);" width="31.8" height="31.3" viewBox="0 0 28.200 26.300" preserveAspectRatio="none"><path d="M0 13.150 L7 0 H21.200 L28.200 13.150 L21.200 26.300 H7Z" fill="rgba(120,185,70,.4)" stroke="rgba(105,170,55,.55)" stroke-width="1.300"/><g fill="rgba(255,255,255,.7)"><rect x="11.05" y="4.95" width="4.5" height="3.1" rx=".6"/><rect x="17.15" y="4.95" width="3.8" height="3.1" rx=".6"/><rect x="13.05" y="9.45" width="5" height="3.1" rx=".6"/><rect x="18.35" y="9.45" width="4.6" height="3.1" rx=".6"/><rect x="13.05" y="15.15" width="3.8" height="2.7" rx=".6"/><rect x="18.35" y="15.15" width="3.8" height="2.7" rx=".6"/><rect x="11.05" y="18.45" width="4.1" height="2.7" rx=".6"/><rect x="16.35" y="18.45" width="4.2" height="2.7" rx=".6"/><rect x="5.35" y="11.05" width="2.5" height="3.5" rx=".6"/><rect x="6.95" y="7.35" width="2.9" height="3.2" rx=".6"/><rect x="8.95" y="11.45" width="3" height="3.1" rx=".6"/><rect x="6.95" y="14.75" width="2.9" height="3.9" rx=".6"/></g></svg>
<span class="t" style="top:964px;font-size:37px;color:rgba(60,62,68,.62);left:68.30px;transform:scaleX(0.9471);transform-origin:0 50%;-webkit-text-stroke:.6px rgba(60,62,68,.62);">agency</span>
<span class="t" style="top:964px;font-size:37px;color:rgba(95,165,20,.62);left:183.00px;transform:scaleX(0.9383);transform-origin:0 50%;-webkit-text-stroke:.6px rgba(95,165,20,.62);">bloc</span>
</div>
</body>
</html>
